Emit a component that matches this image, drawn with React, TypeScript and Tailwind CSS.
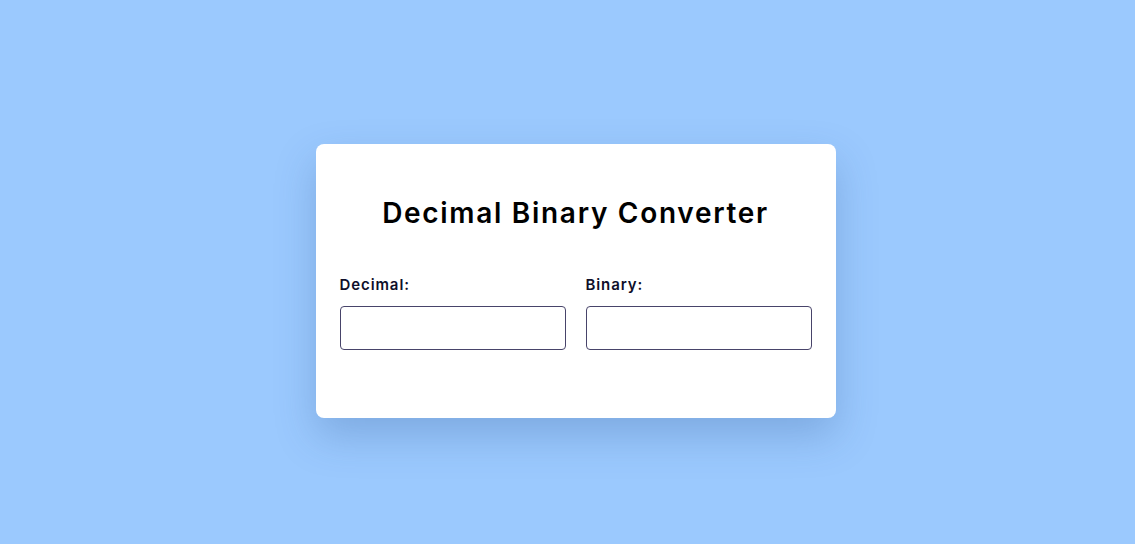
import React from "react";

export default function App() {
  return (
    <div
      className="w-full h-[544px] bg-[#9bc9fe] flex items-center justify-center"
      style={{ fontFamily: "Inter, 'Noto Sans', sans-serif" }}
    >
      <div className="ml-4 w-[520px] bg-white rounded-lg px-6 pt-[48px] pb-[68px] shadow-[0_18px_40px_rgba(40,80,140,0.25)] translate-y-[9px]">
        <h1 className="text-center text-[28px] leading-[42px] font-semibold text-black tracking-[1.7px]">
          Decimal Binary Converter
        </h1>
        <div className="mt-[40px] flex gap-5">
          <div className="flex-1 flex flex-col">
            <label className="text-[15px] leading-[22px] font-semibold text-[#0f0f2a] tracking-[0.9px]">
              Decimal:
            </label>
            <input
              className="mt-[10px] h-[44px] w-full rounded-[4px] border border-[#48446a] outline-none px-2"
              type="text"
            />
          </div>
          <div className="flex-1 flex flex-col">
            <label className="text-[15px] leading-[22px] font-semibold text-[#0f0f2a] tracking-[0.9px]">
              Binary:
            </label>
            <input
              className="mt-[10px] h-[44px] w-full rounded-[4px] border border-[#48446a] outline-none px-2"
              type="text"
            />
          </div>
        </div>
      </div>
    </div>
  );
}
